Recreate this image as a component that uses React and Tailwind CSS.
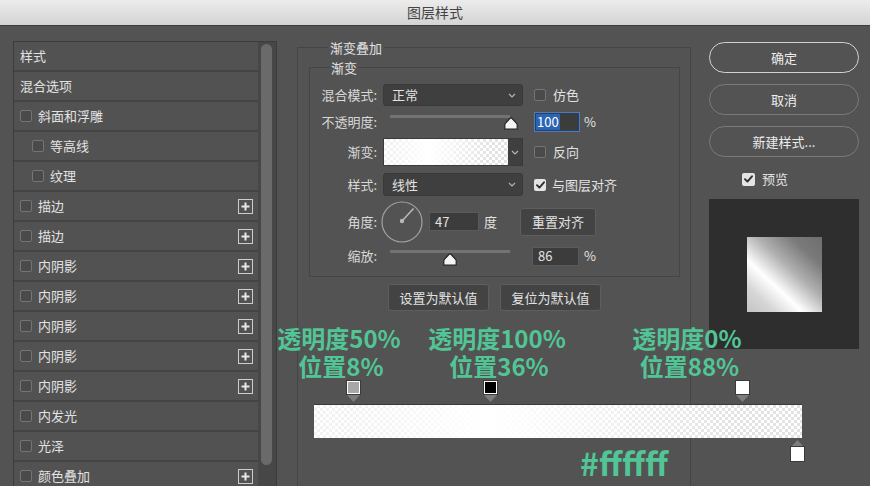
import React from "react";

const FONT = "font-['Noto_Sans_CJK_SC','Noto_Sans',sans-serif]";

function Cb({ checked = false, size = "w-[12px] h-[12px]" }) {
  if (checked) {
    return (
      <span className={`${size} shrink-0 rounded-[2px] bg-[#e4e4e4] flex items-center justify-center`}>
        <svg width="9" height="8" viewBox="0 0 9 8">
          <path d="M1 4.2 L3.4 6.6 L8 1.3" stroke="#2e2e2e" strokeWidth="1.9" fill="none" strokeLinecap="round" strokeLinejoin="round" />
        </svg>
      </span>
    );
  }
  return <span className={`${size} shrink-0 rounded-[2px] border border-[#757575] bg-[#4a4a4a]`} />;
}

function Plus() {
  return (
    <span className="w-[15px] h-[15px] shrink-0 border-[1.5px] border-[#cdcdcd] flex items-center justify-center">
      <svg width="9" height="9" viewBox="0 0 9 9">
        <path d="M4.5 0.5 V8.5 M0.5 4.5 H8.5" stroke="#e8e8e8" strokeWidth="2" />
      </svg>
    </span>
  );
}

function Chevron() {
  return (
    <svg width="8" height="5" viewBox="0 0 8 5">
      <path d="M1 1 L4 4 L7 1" stroke="#b5b5b5" strokeWidth="1.2" fill="none" />
    </svg>
  );
}

function Thumb() {
  return (
    <svg width="14" height="13" viewBox="0 0 14 13">
      <path d="M7 0.8 Q7.6 0.8 8.2 1.5 L12.6 6.3 Q13.2 7 13.2 7.8 L13.2 12.2 L0.8 12.2 L0.8 7.8 Q0.8 7 1.4 6.3 L5.8 1.5 Q6.4 0.8 7 0.8 Z" fill="#f4f4f4" stroke="#222" strokeWidth="1.2" />
    </svg>
  );
}

const rows = [
  { t: "样式", cb: false },
  { t: "混合选项", cb: false },
  { t: "斜面和浮雕", cb: true },
  { t: "等高线", cb: true, indent: true },
  { t: "纹理", cb: true, indent: true },
  { t: "描边", cb: true, plus: true },
  { t: "描边", cb: true, plus: true },
  { t: "内阴影", cb: true, plus: true },
  { t: "内阴影", cb: true, plus: true },
  { t: "内阴影", cb: true, plus: true },
  { t: "内阴影", cb: true, plus: true },
  { t: "内阴影", cb: true, plus: true },
  { t: "内发光", cb: true },
  { t: "光泽", cb: true },
  { t: "颜色叠加", cb: true, plus: true },
];

const GRAD =
  "bg-[image:linear-gradient(to_right,rgba(255,255,255,0.55)_0%,rgba(255,255,255,0.55)_8%,#ffffff_36%,rgba(255,255,255,0)_88%,rgba(255,255,255,0)_100%),repeating-conic-gradient(#e2e2e2_0_25%,#ffffff_0_50%)] bg-[length:100%_100%,6px_6px]";

function Stop({ fill }) {
  return (
    <div className="flex flex-col items-center">
      <span className={`w-[13px] h-[13px] border-[1.5px] border-white outline outline-1 outline-[#3a3a3a] ${fill}`} />
      <svg width="13" height="7" viewBox="0 0 13 7" className="mt-[1px]">
        <path d="M0 0 H13 L6.5 7 Z" fill="#7c7c7c" />
      </svg>
    </div>
  );
}

export default function App() {
  return (
    <div className={`relative w-[870px] h-[486px] overflow-hidden bg-[#535353] ${FONT} text-[13px] text-[#e2e2e2]`}>
      {/* Title bar */}
      <div className="h-[26px] bg-gradient-to-b from-[#ececec] to-[#d4d4d4] border-b border-[#3b3b3b] flex items-center justify-center text-[14px] text-[#444]">
        图层样式
      </div>

      <div className="flex pt-[15px]">
        {/* Left list panel */}
        <div className="ml-[13px] w-[264px] h-[470px] border border-[#3c3c3c] bg-[#474747] flex">
          <div className="w-[244px] flex flex-col">
            {rows.map((r, i) => (
              <div
                key={i}
                className={`h-[30px] shrink-0 bg-[#525252] border-b-2 border-[#444444] flex items-center pr-[5px] ${r.indent ? "pl-[18px]" : "pl-[6px]"}`}
              >
                {r.cb && <Cb />}
                <span className={r.cb ? "ml-[6px]" : ""}>{r.t}</span>
                <span className="flex-1" />
                {r.plus && <Plus />}
              </div>
            ))}
          </div>
          <div className="ml-[3px] mt-[2px] w-[11px] h-[421px] rounded-full bg-[#6a6a6a]" />
        </div>

        {/* Middle */}
        <div className="ml-[20px] w-[394px]">
          <fieldset className="h-[470px] border border-[#454545] px-[11px] pr-[10px]">
            <legend className="ml-[19px] px-[2px] leading-[13px] text-[13px]">渐变叠加</legend>
            <fieldset className="mt-[7px] border border-[#454545] pb-[10px]">
              <legend className="ml-[20px] px-[1px] leading-[13px]">渐变</legend>
              <div className="pt-[10px] flex flex-col">
                {/* Blend mode */}
                <div className="h-[22px] flex items-center">
                  <span className="w-[67px] text-right text-[#d8d8d8]">混合模式:</span>
                  <div className="ml-[6px] w-[140px] h-[22px] rounded-[3px] bg-[#3f3f3f] border border-[#393939] flex items-center pl-[8px] pr-[6px]">
                    <span className="flex-1">正常</span>
                    <Chevron />
                  </div>
                  <div className="ml-[11px] flex items-center">
                    <Cb />
                    <span className="ml-[7px]">仿色</span>
                  </div>
                </div>
                {/* Opacity */}
                <div className="mt-[5px] h-[22px] flex items-center">
                  <span className="w-[67px] text-right text-[#d8d8d8]">不透明度:</span>
                  <div className="ml-[6px] w-[140px] h-[22px] relative">
                    <div className="absolute left-[7px] top-[4px] w-[120px] h-[3px] bg-[#737373]" />
                    <div className="absolute left-[121px] top-[6px]">
                      <Thumb />
                    </div>
                  </div>
                  <div className="ml-[11px] w-[46px] h-[20px] border-[1.5px] border-[#3d7fd6] bg-[#3c3c3c] flex items-center pl-[1px]">
                    <span className="bg-[#2a64b3] text-white leading-[16px] px-[1px]">100</span>
                  </div>
                  <span className="ml-[4px]">%</span>
                </div>
                {/* Gradient */}
                <div className="mt-[5px] h-[28px] flex items-center">
                  <span className="w-[67px] text-right text-[#d8d8d8]">渐变:</span>
                  <div className="ml-[6px] w-[140px] h-[28px] flex border border-[#3a3a3a]">
                    <div className={`w-[124px] h-full ${GRAD}`} />
                    <div className="flex-1 bg-[#3f3f3f] flex items-center justify-center">
                      <Chevron />
                    </div>
                  </div>
                  <div className="ml-[11px] flex items-center">
                    <Cb />
                    <span className="ml-[7px]">反向</span>
                  </div>
                </div>
                {/* Style */}
                <div className="mt-[7px] h-[23px] flex items-center">
                  <span className="w-[67px] text-right text-[#d8d8d8]">样式:</span>
                  <div className="ml-[6px] w-[140px] h-[23px] rounded-[3px] bg-[#3f3f3f] border border-[#393939] flex items-center pl-[8px] pr-[6px]">
                    <span className="flex-1">线性</span>
                    <Chevron />
                  </div>
                  <div className="ml-[11px] flex items-center">
                    <Cb checked />
                    <span className="ml-[6px]">与图层对齐</span>
                  </div>
                </div>
                {/* Angle */}
                <div className="mt-[5px] h-[41px] flex items-center">
                  <span className="w-[67px] text-right text-[#d8d8d8]">角度:</span>
                  <svg width="42" height="42" viewBox="0 0 42 42" className="ml-[4px] shrink-0">
                    <circle cx="21" cy="21" r="20" stroke="#a3a3a3" strokeWidth="1.2" fill="none" />
                    <line x1="21" y1="20" x2="32.5" y2="7.5" stroke="#b8b8b8" strokeWidth="1.6" />
                    <circle cx="21" cy="20" r="2.2" fill="#b8b8b8" />
                  </svg>
                  <div className="ml-[6px] w-[50px] h-[19px] bg-[#3c3c3c] border border-[#5a5a5a] flex items-center pl-[5px]">47</div>
                  <span className="ml-[5px]">度</span>
                  <div className="ml-[23px] w-[76px] h-[28px] rounded-[3px] bg-[#434343] border border-[#5e5e5e] flex items-center justify-center">
                    重置对齐
                  </div>
                </div>
                {/* Scale */}
                <div className="mt-[4px] h-[20px] flex items-center">
                  <span className="w-[67px] text-right text-[#d8d8d8]">缩放:</span>
                  <div className="ml-[6px] w-[140px] h-[20px] relative">
                    <div className="absolute left-[7px] top-[4px] w-[120px] h-[3px] bg-[#737373]" />
                    <div className="absolute left-[60px] top-[7px]">
                      <Thumb />
                    </div>
                  </div>
                  <div className="ml-[9px] w-[47px] h-[19px] bg-[#3c3c3c] border border-[#5a5a5a] flex items-center pl-[5px]">86</div>
                  <span className="ml-[5px]">%</span>
                </div>
              </div>
            </fieldset>
            <div className="mt-[7px] flex justify-center gap-[11px]">
              <div className="w-[101px] h-[27px] rounded-[3px] bg-[#434343] border border-[#5e5e5e] flex items-center justify-center">设置为默认值</div>
              <div className="w-[101px] h-[27px] rounded-[3px] bg-[#434343] border border-[#5e5e5e] flex items-center justify-center">复位为默认值</div>
            </div>
          </fieldset>
        </div>

        {/* Right column */}
        <div className="ml-[18px] w-[150px] flex flex-col">
          <div className="mt-[1px] h-[31px] rounded-full border-[1.5px] border-[#d2d2d2] flex items-center justify-center text-[#ececec]">确定</div>
          <div className="mt-[11px] h-[31px] rounded-full border border-[#7a7a7a] flex items-center justify-center text-[#ececec]">取消</div>
          <div className="mt-[11px] h-[31px] rounded-full border border-[#7a7a7a] flex items-center justify-center text-[#ececec]">新建样式...</div>
          <div className="mt-[13px] h-[18px] flex items-center pl-[33px]">
            <Cb checked size="w-[13px] h-[13px]" />
            <span className="ml-[7px]">预览</span>
          </div>
          <div className="mt-[11px] h-[150px] bg-[#2e2e2e] flex items-center justify-center">
            <div className="w-[75px] h-[75px] bg-[linear-gradient(43deg,#c4c4c4_0%,#d6d6d6_18%,#ffffff_36%,#b0b0b0_58%,#7a7a7a_80%,#6e6e6e_100%)]" />
          </div>
        </div>
      </div>

      {/* Annotation overlay */}
      <div className="absolute left-[259px] top-[324px] w-[160px] text-center text-[24px] leading-[28px] font-bold text-[#52c596]">
        <div>透明度50%</div>
        <div className="pl-[4px]">位置8%</div>
      </div>
      <div className="absolute left-[417px] top-[324px] w-[160px] text-center text-[24px] leading-[28px] font-bold text-[#52c596]">
        <div>透明度100%</div>
        <div className="pl-[4px]">位置36%</div>
      </div>
      <div className="absolute left-[607px] top-[324px] w-[160px] text-center text-[24px] leading-[28px] font-bold text-[#52c596]">
        <div>透明度0%</div>
        <div className="pl-[5px]">位置88%</div>
      </div>

      {/* Gradient editor overlay */}
      <div className="absolute left-[314px] top-[381px] w-[488px]">
        <div className="relative h-[22px]">
          <div className="absolute left-[33px] top-0"><Stop fill="bg-[#a8a8a8]" /></div>
          <div className="absolute left-[170px] top-0"><Stop fill="bg-black" /></div>
          <div className="absolute left-[422px] top-0"><Stop fill="bg-white" /></div>
        </div>
        <div className={`mt-[1px] h-[34px] border-t border-[#3a3a3a] ${GRAD}`} />
        <div className="relative h-[20px]">
          <div className="absolute left-[477px] top-[2px] flex flex-col items-center">
            <svg width="13" height="7" viewBox="0 0 13 7">
              <path d="M0 7 H13 L6.5 0 Z" fill="#7c7c7c" />
            </svg>
            <span className="w-[13px] h-[14px] border-[1.5px] border-white outline outline-1 outline-[#3a3a3a] bg-white" />
          </div>
        </div>
      </div>

      <div className="absolute left-[580px] top-[442px] text-[32px] leading-[40px] font-bold text-[#52c596]">#ffffff</div>
    </div>
  );
}
